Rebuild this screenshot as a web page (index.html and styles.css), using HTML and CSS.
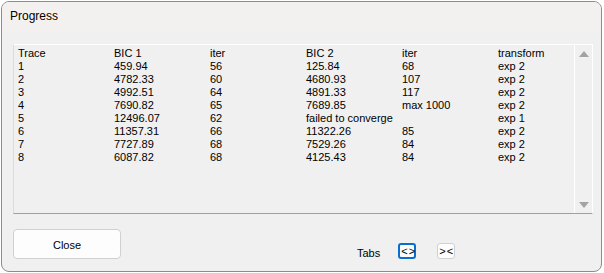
FILE: index.html
```html
<!DOCTYPE html>
<html>
<head>
<meta charset="utf-8">
<title>Progress</title>
<link rel="stylesheet" href="styles.css">
</head>
<body>
<div class="dlg">
  <div class="dlg_title">Progress</div>
  <div class="dlg_body">
    <div class="listbox">
      <table class="grid">
        <tr><td>Trace</td><td>BIC 1</td><td>iter</td><td>BIC 2</td><td>iter</td><td>transform</td></tr>
        <tr><td>1</td><td>459.94</td><td>56</td><td>125.84</td><td>68</td><td>exp 2</td></tr>
        <tr><td>2</td><td>4782.33</td><td>60</td><td>4680.93</td><td>107</td><td>exp 2</td></tr>
        <tr><td>3</td><td>4992.51</td><td>64</td><td>4891.33</td><td>117</td><td>exp 2</td></tr>
        <tr><td>4</td><td>7690.82</td><td>65</td><td>7689.85</td><td>max 1000</td><td>exp 2</td></tr>
        <tr><td>5</td><td>12496.07</td><td>62</td><td>failed to converge</td><td></td><td>exp 1</td></tr>
        <tr><td>6</td><td>11357.31</td><td>66</td><td>11322.26</td><td>85</td><td>exp 2</td></tr>
        <tr><td>7</td><td>7727.89</td><td>68</td><td>7529.26</td><td>84</td><td>exp 2</td></tr>
        <tr><td>8</td><td>6087.82</td><td>68</td><td>4125.43</td><td>84</td><td>exp 2</td></tr>
      </table>
      <div class="vscroll">
        <span class="arrow up"></span>
        <span class="arrow down"></span>
      </div>
    </div>
    <div class="footer">
      <button class="btn_close">Close</button>
      <span class="tabs_label">Tabs</span>
      <button class="tab_btn current_tab">&lt;&gt;</button>
      <button class="tab_btn">&gt;&lt;</button>
    </div>
  </div>
</div>
</body>
</html>
```

FILE: styles.css
```css
* { margin:0; padding:0; box-sizing:border-box;}
body{ background:#fff; font:normal 11px/13px "Liberation Sans", Arial, sans-serif; color:#000;}
.dlg{ width:601px; height:271px; margin:1px 0 0 1px; border:1px solid #8c8c8c; border-radius:8px; background:#f0f0f0; overflow:hidden; display:flex; flex-direction:column;}
.dlg_title{ height:30px; background:#f3f1ef; font:normal 12px/29px "Liberation Sans", Arial, sans-serif; padding-left:8px;}
.dlg_body{ flex:1; padding:12px 8px 0 11px;}
.listbox{ display:flex; height:170px; border:1px solid #fff; border-left-color:#dcdcdc; border-top-color:#fff; border-bottom-color:#a0a0a0; border-right-color:#fff;}
.grid{ flex:1; align-self:flex-start; border-collapse:collapse; margin:2px 0 0 4px; table-layout:fixed;}
.grid td{ width:96px; height:13px; padding:0; white-space:nowrap; line-height:13px;}
.grid td:last-child{ width:auto;}
.vscroll{ width:18px; border-left:1px solid #fff; display:flex; flex-direction:column; justify-content:space-between; align-items:center; padding:6px 0 5px 1px;}
.arrow{ width:0; height:0; border-left:5px solid transparent; border-right:5px solid transparent;}
.arrow.up{ border-bottom:6px solid #a3a3a3;}
.arrow.down{ border-top:6px solid #a3a3a3;}
.footer{ display:flex; align-items:flex-start; margin-top:15px;}
.btn_close{ width:108px; height:30px; padding-top:1px; background:#fdfdfd; border:1px solid #d0d0d0; border-radius:4px; font:normal 11px "Liberation Sans", Arial, sans-serif; color:#000;}
.tabs_label{ margin:18px 0 0 236px; font-size:11px;}
.tab_btn{ width:18px; height:16px; margin-top:14px; padding-left:1px; background:#fdfdfd; border:1px solid #d0d0d0; border-radius:3px; font:normal 11px/12px "Liberation Sans", Arial, sans-serif; color:#000; letter-spacing:1px; text-align:center;}
.tab_btn.current_tab{ margin-left:18px; border:2px solid #0a6ecf;}
.tab_btn + .tab_btn{ margin-left:21px;}
```
